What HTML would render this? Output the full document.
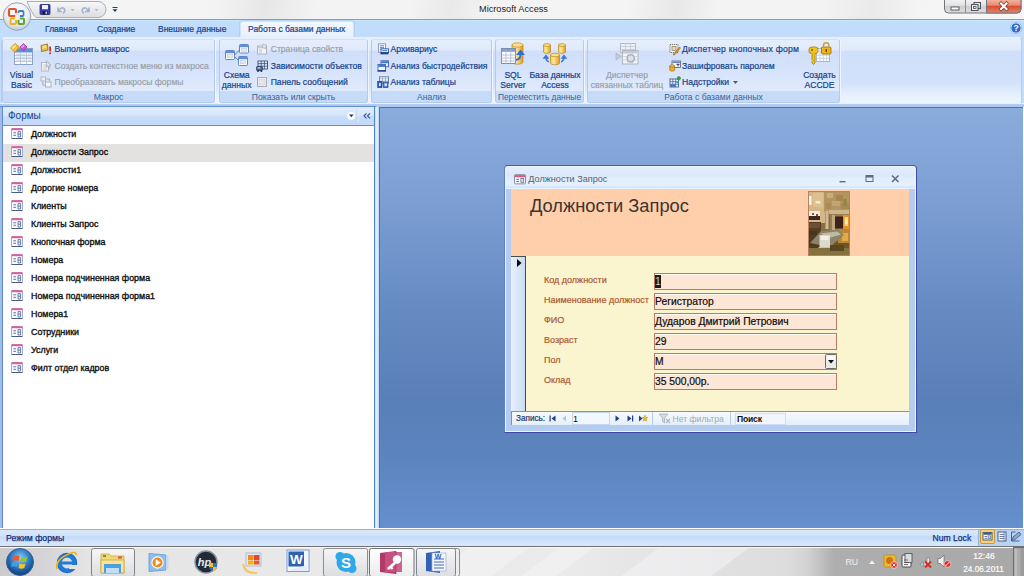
<!DOCTYPE html>
<html><head><meta charset="utf-8"><title>Microsoft Access</title>
<style>
*{box-sizing:border-box;margin:0;padding:0}
html,body{width:1024px;height:576px;overflow:hidden;background:#c2dcfb;font-family:"Liberation Sans",sans-serif;font-size:8.5px;color:#15428b}
.a{position:absolute;white-space:nowrap}
svg{position:absolute;overflow:visible}
#title{z-index:5;left:0;top:0;width:1024px;height:20px;background:linear-gradient(100deg,#f6f6f6 0%,#f3f3f3 21%,#e7e7e7 26%,#f3f3f3 31%,#f3f3f3 40%,#e9e9e9 44%,#f3f3f3 48%,#f4f4f4 61%,#e8e8e8 66%,#f3f3f3 70%,#f3f3f3 80%,#eaeaea 85%,#f5f5f5 90%,#f6f6f6 100%);border-bottom:1px solid #8e9cb0}
#tabs{left:0;top:20px;width:1024px;height:18px;background:linear-gradient(#c8e6fd 0,#c8e6fd 1px,#c2dcfb 1px)}
.tab{top:4px;font-size:8.5px;color:#15428b;-webkit-text-stroke:0.2px #15428b}
#atab{left:240px;top:1px;width:114px;height:17px;background:linear-gradient(#f4f8fe,#e6effc);border:1px solid #d3e3f7;border-bottom:none;border-radius:3px 3px 0 0;box-shadow:0 0 0 1px rgba(160,195,240,.5)}
#ribbon{left:1px;top:37px;width:1021px;height:67px;border:1px solid #b4cff0;border-top-color:#e9f2fb;border-bottom-color:#eaf4fb;border-radius:3px;background:linear-gradient(#e6effc 0,#dfeafb 12px,#cfdefa 13px,#d3e2fa 45px,#e6f1fc 58px,#eaf5fd 66px)}
.grp{top:1px;height:63.500px;border:1px solid #b4cbec;border-top-color:#d3e1f2;border-radius:3px;background:linear-gradient(#e6eefc 0,#e1eafb 10px,#d0defa 11px,#d6e3fb 30px,#dfeafc 50.500px,#c5dbf8 51.500px,#c5dbf8 63px);box-shadow:1px 0 0 #eef5fd,0 1px 0 #eef5fd}
.gl{bottom:-0.500px;left:0;right:0;text-align:center;font-size:8.6px;color:#3a6297;height:10px;line-height:10px}
.sb{font-size:8.6px;color:#15428b;height:10px;line-height:10px;-webkit-text-stroke:0.2px #15428b}

.bl{font-size:8.6px;line-height:10px;text-align:center;color:#15428b;-webkit-text-stroke:0.2px #15428b}

#nav{left:0;top:107px;width:379px;height:422px;background:linear-gradient(90deg,#a3bce3 0,#a3bce3 2px,#5f8cd4 2px,#5f8cd4 3px,#c6dcf8 3px,#c6dcf8 375px,#d4e6fb 376px,#f2f8ff 377px,#c3daf7 378px,#c3daf7 379px)}
#navhead{left:3px;top:0;width:372px;height:18.500px;background:linear-gradient(#e1edfc,#d6e6fb 45%,#c6dbf8 55%,#c4daf8);border-bottom:1.500px solid #5f8fd8;border-right:1px solid #4f84d2}
#navbody{left:3px;top:18.500px;width:372px;height:403px;background:#fff;border-right:1px solid #4f84d2}
.ni{left:0;width:371px;height:18px}
.ni span{position:absolute;left:28px;top:3px;font-size:8.9px;line-height:10px;color:#111;-webkit-text-stroke:0.35px #111}
.ni.sel{background:#e4e1e1}
#ws{left:379px;top:107px;width:644px;height:421px;box-shadow:1px 0 0 #fff;border-top:1px solid #6b6f78;border-left:1px solid #6b6f78;background:linear-gradient(#8aacdc 0%,#7c9ed3 22%,#678cc4 46%,#5a7fb8 70%,#5c84be 83%,#668fce 100%)}
#status{left:0;top:528px;width:1024px;height:18px;background:linear-gradient(#fff 0,#fff 1px,#8fb3e3 1px,#8fb3e3 2px,#d8e8fc 2px,#d2e4fb 7px,#c1d9f8 9px,#cfe3fb 13px,#d6e8fc 18px)}
#task{left:0;top:546px;width:1024px;height:30px;background:linear-gradient(90deg,#cbcbcd 0,#d6d6d8 50px,#e4e4e5 88px,#e9e9ea 300px,#ebebeb 560px,#e2e2e3 700px,#dcdcdc 790px,#d2d2d2 808px,#aeaeae 834px,#a8a8a8 1010px,#9a9a9a 1024px);border-top:1px solid #6f6f6f;box-shadow:inset 0 1px 0 #fafafa}

#fw{left:504px;top:165px;width:413px;height:268px;border:1px solid #3d4aa3;border-left-color:#5f7fc4;border-top-color:#4a58aa;border-radius:4px 4px 0 0;background:linear-gradient(#fff 0,#fff 1px,#e3edfc 1px,#dce9fb 10px,#e2edfc 12px,#e6f0fd 20px,#c4e4fb 21px,#e8f2fd 22.5px,#dbe8f9 23px);box-shadow:inset 0 0 0 1px #eef4fd}
#fwin{left:1px;top:23px;width:409px;height:242px;background:#b4ccf0}
#fhead{left:5px;top:0;width:398px;height:67px;background:#ffcfac}
#fdet{left:5px;top:67px;width:398px;height:155px;background:#fbf5cf}
#rsel{left:0;top:0;width:14.500px;height:155px;background:linear-gradient(90deg,#e8f0fb,#c9dcf4);border-right:1px solid #4a4a4a;border-top:1px solid #4a4a4a}
.fl{left:33px;font-size:9px;line-height:11px;color:#ac5832;-webkit-text-stroke:0.2px #ac5832}
.fb{left:142.500px;width:183px;height:17px;border:1px solid #bb7a64;background:#fce6d6;box-shadow:inset 0 1px 0 #fffaf4;font-size:10.300px;line-height:15px;color:#0c0c0c;padding-left:0.500px;-webkit-text-stroke:0.2px #0c0c0c}
#fnav{left:5px;top:222px;width:398px;height:14px;background:linear-gradient(#f7fafe,#e4effc);border-top:1px solid #6a96d8;border-left:1px solid #6a96d8}
.sb.dis,.bl.dis{color:#979da6;-webkit-text-stroke:0.15px #979da6}
</style></head><body>
<!-- TITLE BAR -->
<div id="title" class="a">
 <svg width="120" height="34" viewBox="0 0 120 34" style="left:0;top:0">
  <defs>
   <radialGradient id="ob" cx="0.5" cy="0.35" r="0.7"><stop offset="0" stop-color="#ffffff"/><stop offset="0.6" stop-color="#e9edf3"/><stop offset="1" stop-color="#b9c2d0"/></radialGradient>
   <linearGradient id="qg" x1="0" y1="0" x2="0" y2="1"><stop offset="0" stop-color="#f7f7f8"/><stop offset="1" stop-color="#dcdee2"/></linearGradient>
  </defs>
  <path d="M27 1.5 H98 a8 8 0 0 1 0 16 H36 Q32 14 27 1.5Z" fill="url(#qg)" stroke="#a9adb6" stroke-width="1"/>
  <circle cx="17" cy="16.5" r="13.8" fill="url(#ob)" stroke="#9aa3b3" stroke-width="1"/>
  <rect x="9" y="9" width="7" height="7" rx="1.2" fill="none" stroke="#e0552a" stroke-width="2.2"/>
  <rect x="18.5" y="11" width="5" height="5" rx="1" fill="none" stroke="#3f7fd0" stroke-width="1.8"/>
  <rect x="10.5" y="18.5" width="5.5" height="5.5" rx="1" fill="none" stroke="#efb321" stroke-width="2"/>
  <rect x="18.5" y="18.5" width="5.5" height="5.5" rx="1" fill="none" stroke="#5aa83a" stroke-width="2"/>
  <rect x="15" y="13" width="5" height="7" fill="#f7f4ea" opacity="0.85"/>
  <!-- save -->
  <rect x="40" y="4.5" width="10" height="10" rx="0.8" fill="#3a3fb0" stroke="#23277a" stroke-width="0.8"/>
  <rect x="42" y="5" width="6" height="4.2" fill="#eef0fb"/>
  <rect x="42.5" y="11" width="5" height="3.4" fill="#15173f"/><rect x="45.5" y="11.6" width="1.4" height="2.2" fill="#e8e8f4"/>
  <!-- undo -->
  <path d="M58 7.5 v4 h4 M58.5 11 q2.5 -4.5 5.5 -2.5 q2 2 -1 5" fill="none" stroke="#9fb3d3" stroke-width="1.6"/>
  <path d="M70.5 9 h4 l-2 2.2z" fill="#b0b7c3"/>
  <!-- redo -->
  <path d="M89 7.5 v4 h-4 M88.5 11 q-2.500 -4.500 -5.500 -2.500 q-2 2 1 5" fill="none" stroke="#9fb3d3" stroke-width="1.6"/>
  <path d="M94.500 9 h4 l-2 2.200z" fill="#b0b7c3"/>
  <!-- customize -->
  <rect x="112.500" y="7" width="5" height="1" fill="#1d3f7f"/><path d="M112.500 9.300 h5 l-2.500 2.700z" fill="#1d3f7f"/>
 </svg>
 <span class="a" id="wtitle" style="left:479px;top:4px;font-size:9.2px;color:#1e1e1e;line-height:11px">Microsoft Access</span>
 <svg width="78" height="15" viewBox="0 0 78 15" style="left:944px;top:0">
  <defs>
   <linearGradient id="wb" x1="0" y1="0" x2="0" y2="1"><stop offset="0" stop-color="#f4f4f4"/><stop offset="0.45" stop-color="#e3e3e3"/><stop offset="0.5" stop-color="#cfcfcf"/><stop offset="1" stop-color="#dddddd"/></linearGradient>
   <linearGradient id="wc" x1="0" y1="0" x2="0" y2="1"><stop offset="0" stop-color="#f3b9a6"/><stop offset="0.45" stop-color="#e88a70"/><stop offset="0.5" stop-color="#dc4a30"/><stop offset="1" stop-color="#e08868"/></linearGradient>
  </defs>
  <path d="M0.500 -1 V9 a4 4 0 0 0 4 4 H73 a4 4 0 0 0 4 -4 V-1Z" fill="url(#wb)" stroke="#70747c" stroke-width="1"/>
  <path d="M42.500 -1 V13 H73 a4 4 0 0 0 4 -4 V-1Z" fill="url(#wc)" stroke="#70747c" stroke-width="1"/>
  <path d="M21.500 0 V13" stroke="#8a8d94" stroke-width="1"/>
  <rect x="7" y="7" width="8" height="3" fill="#fff" stroke="#4d5158" stroke-width="0.9"/>
  <rect x="30" y="2.500" width="6.500" height="6" fill="none" stroke="#4d5158" stroke-width="1"/>
  <rect x="27.500" y="4.500" width="6.500" height="6" fill="#f0f0f0" stroke="#4d5158" stroke-width="1"/>
  <rect x="29.500" y="6.500" width="2.500" height="2" fill="none" stroke="#4d5158" stroke-width="0.8"/>
  <path d="M57 3.500 l5.500 5.500 M62.500 3.500 l-5.500 5.500" stroke="#6a3a32" stroke-width="3.400" stroke-linecap="square"/>
  <path d="M57 3.500 l5.500 5.500 M62.500 3.500 l-5.500 5.500" stroke="#fff" stroke-width="2.100" stroke-linecap="square"/>
 </svg>
</div>
<!-- TABS -->
<div id="tabs" class="a">
 <svg width="12" height="12" viewBox="0 0 12 12" style="left:1009.5px;top:2px"><circle cx="6" cy="6" r="5.200" fill="#2f6fd0" stroke="#e8f1fd" stroke-width="1"/><circle cx="6" cy="6" r="5.700" fill="none" stroke="#7ea6dc" stroke-width="0.600"/><text x="6" y="9" font-size="8.500" font-weight="bold" fill="#fff" text-anchor="middle" font-family="Liberation Sans, sans-serif">?</text></svg>
 <div id="atab" class="a"></div>
 <span class="a tab" style="left:45px">Главная</span>
 <span class="a tab" style="left:97px">Создание</span>
 <span class="a tab" style="left:158px">Внешние данные</span>
 <span class="a tab" style="left:248px">Работа с базами данных</span>
</div>
<!-- RIBBON -->
<div id="ribbon" class="a">
 <div class="a grp" id="g1" style="left:0px;width:213px"><div class="a gl">Макрос</div></div>
 <div class="a grp" id="g2" style="left:217px;width:149px"><div class="a gl">Показать или скрыть</div></div>
 <div class="a grp" id="g3" style="left:369px;width:121px"><div class="a gl">Анализ</div></div>
 <div class="a grp" id="g4" style="left:493px;width:89px"><div class="a gl" style="font-size:8.400px">Переместить данные</div></div>
 <div class="a grp" id="g5" style="left:585px;width:253px"><div class="a gl">Работа с базами данных</div></div>
</div>
<div id="rc" class="a" style="left:0;top:0;width:1024px;height:0">
<svg width="24" height="23" viewBox="0 0 24 23" style="left:10px;top:43px"><rect x="4.500" y="5.500" width="18" height="16" fill="#fdfdfe" stroke="#8aa0c4" stroke-width="1"/><rect x="5" y="6" width="17" height="3.500" fill="#5d8fdc"/><path d="M5 12.500 h17 M5 15.500 h17 M5 18.500 h17 M10.500 9.500 v12 M16.500 9.500 v12" stroke="#b4c3dc" stroke-width="0.900"/><rect x="6" y="10.500" width="4" height="1.500" fill="#d5deec"/><rect x="11.500" y="10.500" width="4" height="1.500" fill="#d5deec"/><rect x="17.500" y="10.500" width="4" height="1.500" fill="#d5deec"/><rect x="6" y="13.500" width="4" height="1.500" fill="#d5deec"/><rect x="11.500" y="13.500" width="4" height="1.500" fill="#d5deec"/><rect x="17.500" y="13.500" width="4" height="1.500" fill="#d5deec"/><rect x="6" y="16.500" width="4" height="1.500" fill="#d5deec"/><rect x="11.500" y="16.500" width="4" height="1.500" fill="#d5deec"/><rect x="17.500" y="16.500" width="4" height="1.500" fill="#d5deec"/><path d="M0.500 5 l4.500 -4.500 l4.500 3.500 l-4.500 5.500z" fill="#f2c030" stroke="#b0851a" stroke-width="0.700"/><path d="M1.500 5 l3.500 -3.500 l1.500 1.200 l-3.500 3.700z" fill="#fbe28a"/><path d="M10 4 l3.500 -3.500 l3.500 3.500 l-3.500 4z" fill="#d64fd6" stroke="#9a2c9a" stroke-width="0.700"/><path d="M11 4 l2.500 -2.500 l1.200 1.200 l-2.500 2.600z" fill="#f0a0f0"/></svg><div class="a bl" style="left:-28.5px;width:100px;top:69.5px">Visual<br>Basic</div>
<svg width="12" height="12" viewBox="0 0 12 12" style="left:40px;top:43px"><path d="M1 2.500 l6.500 -1.500 l0.500 6 l-6.500 1.500z" fill="#e9c04a" stroke="#8a6a1a" stroke-width="0.800"/><path d="M2.500 3.500 l3.500 -0.800 M2.700 5.200 l3.500 -0.800" stroke="#fff6cf" stroke-width="0.800"/><rect x="9.300" y="3.500" width="1.700" height="5" fill="#d8261c"/><rect x="9.300" y="9.500" width="1.700" height="1.700" fill="#d8261c"/></svg><span class="a sb" style="left:54.5px;top:44px">Выполнить макрос</span>
<svg width="12" height="12" viewBox="0 0 12 12" style="left:40px;top:59.5px"><rect x="1.500" y="2.500" width="7" height="8.500" fill="#f2f4f7" stroke="#aab1bd" stroke-width="0.900"/><path d="M3 5 h4 M3 7 h4 M3 9 h4" stroke="#bcc3cf" stroke-width="0.800"/><path d="M6.500 1 l4.500 4 l-2 0.300 l1 2.700 l-1.200 0.400 l-1 -2.600 l-1.300 1.200z" fill="#e4e8ee" stroke="#9aa2b0" stroke-width="0.700"/></svg><span class="a sb dis" style="left:54.5px;top:60.5px">Создать контекстное меню из макроса</span>
<svg width="12" height="12" viewBox="0 0 12 12" style="left:40px;top:76px"><rect x="1" y="1" width="4.500" height="4" fill="#eef0f4" stroke="#a6adba" stroke-width="0.900"/><rect x="5.500" y="6" width="5.500" height="5" fill="#f4f5f8" stroke="#a6adba" stroke-width="0.900"/><path d="M6.500 3 h3 v2.200 M2.800 6 v3.200 h2" fill="none" stroke="#9ca4b2" stroke-width="0.900"/></svg><span class="a sb dis" style="left:54.5px;top:77px">Преобразовать макросы формы</span>
<svg width="24" height="23" viewBox="0 0 24 23" style="left:225px;top:44px"><path d="M9 11.500 l6 -6 M9 12.500 l6 5" stroke="#5f7fb4" stroke-width="1"/><rect x="0.5" y="6.5" width="9" height="9" rx="0.800" fill="#fbfcfe" stroke="#5f86c8" stroke-width="1"/><rect x="1.0" y="7.0" width="8" height="2.200" fill="#5d8fdc"/><rect x="2.3" y="10.3" width="5.4" height="3.4000000000000004" fill="#e3e9f3" stroke="#b9c4d8" stroke-width="0.500"/><rect x="14.5" y="0.5" width="9" height="8.5" rx="0.800" fill="#fbfcfe" stroke="#5f86c8" stroke-width="1"/><rect x="15.0" y="1.0" width="8" height="2.200" fill="#5d8fdc"/><rect x="16.3" y="4.3" width="5.4" height="2.9000000000000004" fill="#e3e9f3" stroke="#b9c4d8" stroke-width="0.500"/><rect x="13.5" y="12.5" width="9" height="9" rx="0.800" fill="#fbfcfe" stroke="#5f86c8" stroke-width="1"/><rect x="14.0" y="13.0" width="8" height="2.200" fill="#5d8fdc"/><rect x="15.3" y="16.3" width="5.4" height="3.4000000000000004" fill="#e3e9f3" stroke="#b9c4d8" stroke-width="0.500"/></svg><div class="a bl" style="left:186.7px;width:100px;top:69.5px">Схема<br>данных</div>
<svg width="12" height="12" viewBox="0 0 12 12" style="left:256px;top:43px"><rect x="1.500" y="3" width="9" height="8" fill="#f1f3f7" stroke="#a9b0bd" stroke-width="0.900"/><rect x="2" y="3.500" width="8" height="1.800" fill="#c5ccd8"/><path d="M3 7 h3 M3 9 h3" stroke="#b3bac6" stroke-width="0.800"/><path d="M7 1 l3.500 1.200 l-1 3.300 l-3.500 -1.200z" fill="#e5e8ee" stroke="#a3abb8" stroke-width="0.700"/></svg><span class="a sb dis" style="left:270.7px;top:44px">Страница свойств</span>
<svg width="12" height="12" viewBox="0 0 12 12" style="left:256px;top:59.5px"><rect x="2" y="1" width="9.500" height="8" fill="#e3ebf8" stroke="#35507f" stroke-width="0.900"/><path d="M2 3.600 h9.500 M2 6.200 h9.500 M5.200 1 v8 M8.400 1 v8" stroke="#35507f" stroke-width="0.800"/><rect x="0.500" y="6.500" width="6" height="4" rx="0.800" fill="#4a5f86" stroke="#243a60" stroke-width="0.700"/><rect x="1.500" y="7.300" width="3" height="1.300" fill="#cfd8ea"/><circle cx="2" cy="11" r="1" fill="#1f2f50"/><circle cx="5.300" cy="11" r="1" fill="#1f2f50"/></svg><span class="a sb" style="left:270.7px;top:60.5px">Зависимости объектов</span>
<svg width="12" height="12" viewBox="0 0 12 12" style="left:256px;top:76px"><rect x="1.500" y="1.500" width="9" height="9" fill="#f4f4f4" stroke="#a8aeb8" stroke-width="1"/><rect x="3" y="3" width="6" height="6" fill="#e6e6e6" stroke="#c9cdd3" stroke-width="0.600"/></svg><span class="a sb" style="left:270.7px;top:77px">Панель сообщений</span>
<svg width="12" height="12" viewBox="0 0 12 12" style="left:376.5px;top:43px"><rect x="1.500" y="0.800" width="7" height="8.500" fill="#fdfeff" stroke="#7f95bd" stroke-width="0.900"/><path d="M3 2.800 h4 M3 4.600 h4 M3 6.400 h4" stroke="#3f78d8" stroke-width="0.900"/><rect x="4" y="5.800" width="7.500" height="3.800" fill="#dfe8f7" stroke="#3a5a9a" stroke-width="0.900"/><rect x="3.500" y="9.300" width="8" height="2" fill="#1f3f80"/><path d="M5.500 7.500 h4.500" stroke="#3f78d8" stroke-width="0.900"/></svg><span class="a sb" style="left:390.5px;top:44px">Архивариус</span>
<svg width="12" height="12" viewBox="0 0 12 12" style="left:376.5px;top:59.5px"><rect x="4" y="0.800" width="7.500" height="6" fill="#eaf1fc" stroke="#3a62b0" stroke-width="0.900"/><rect x="4.400" y="1.200" width="6.700" height="2" fill="#3f78d8"/><rect x="1" y="4.500" width="7.500" height="6" fill="#f8fafe" stroke="#3a62b0" stroke-width="0.900"/><rect x="1.400" y="4.900" width="6.700" height="2" fill="#3f78d8"/><rect x="0.500" y="10.300" width="8.500" height="1.400" fill="#1f3f80"/></svg><span class="a sb" style="left:390.5px;top:60.5px">Анализ быстродействия</span>
<svg width="12" height="12" viewBox="0 0 12 12" style="left:376.5px;top:76px"><rect x="2.500" y="0.800" width="9" height="6.500" fill="#f6f7fa" stroke="#6b7c99" stroke-width="0.900"/><path d="M2.500 2.800 h9 M2.500 5 h9 M5.500 0.800 v6.500 M8.500 0.800 v6.500" stroke="#8d9bb5" stroke-width="0.600"/><rect x="0.700" y="5.500" width="4.300" height="6" fill="#2f62c0" stroke="#1a3a80" stroke-width="0.700"/><rect x="2" y="7" width="1.600" height="3" fill="#e8effc"/><rect x="6.500" y="6" width="4.500" height="5.500" fill="#4f86dc" stroke="#1f3f80" stroke-width="0.700"/><rect x="7.600" y="7.500" width="2.300" height="2.300" fill="#e8effc"/></svg><span class="a sb" style="left:390.5px;top:77px">Анализ таблицы</span>
<svg width="24" height="23" viewBox="0 0 24 23" style="left:501px;top:43px"><defs><linearGradient id="cy" x1="0" y1="0" x2="1" y2="0"><stop offset="0" stop-color="#f7c843"/><stop offset="0.35" stop-color="#fde9a2"/><stop offset="1" stop-color="#e29a14"/></linearGradient></defs><path d="M11 2 v17 a5.5 2.2 0 0 0 11 0 v-17z" fill="url(#cy)" stroke="#b27a10" stroke-width="0.600"/><ellipse cx="16.5" cy="2" rx="5.5" ry="2.2" fill="#fbe08a" stroke="#b27a10" stroke-width="0.600"/><rect x="0.500" y="5.500" width="14" height="15" fill="#fdfdfe" stroke="#7d8fae" stroke-width="1"/><rect x="1" y="6" width="13" height="2.800" fill="#7f9fd6"/><path d="M0.500 12 h14 M0.500 15 h14 M0.500 18 h14 M5 6 v14.500 M9.700 6 v14.500" stroke="#aab7cf" stroke-width="0.800"/><path d="M15 17 q5 -1 4.500 -6.500 M17 11 l2.500 -3 l2.500 3z" fill="none" stroke="#2f6fd0" stroke-width="1.800"/><path d="M16.800 11.200 l2.700 -3.400 l2.700 3.400z" fill="#2f6fd0"/></svg><div class="a bl" style="left:463px;width:100px;top:69.5px">SQL<br>Server</div>
<svg width="24" height="23" viewBox="0 0 24 23" style="left:543px;top:43px"><defs><linearGradient id="cy2" x1="0" y1="0" x2="1" y2="0"><stop offset="0" stop-color="#f7c843"/><stop offset="0.35" stop-color="#fde9a2"/><stop offset="1" stop-color="#e29a14"/></linearGradient></defs><path d="M0.5 2 v7 a3.5 1.4 0 0 0 7 0 v-7z" fill="url(#cy2)" stroke="#b27a10" stroke-width="0.600"/><ellipse cx="4.0" cy="2" rx="3.5" ry="1.4" fill="#fbe08a" stroke="#b27a10" stroke-width="0.600"/><path d="M15.5 2 v7 a3.5 1.4 0 0 0 7 0 v-7z" fill="url(#cy2)" stroke="#b27a10" stroke-width="0.600"/><ellipse cx="19.0" cy="2" rx="3.5" ry="1.4" fill="#fbe08a" stroke="#b27a10" stroke-width="0.600"/><path d="M7.5 12 v8 a4.5 1.8 0 0 0 9 0 v-8z" fill="url(#cy2)" stroke="#b27a10" stroke-width="0.600"/><ellipse cx="12.0" cy="12" rx="4.5" ry="1.8" fill="#fbe08a" stroke="#b27a10" stroke-width="0.600"/><path d="M6 19 q-3 -1 -3 -4.500 M1 15 l2 -2.500 l2 2.500z M18 19 q3 -1 3 -4.500 M19 15 l2 -2.500 l2 2.500z" fill="#3a78d8" stroke="#3a78d8" stroke-width="1.300"/></svg><div class="a bl" style="left:505px;width:100px;top:69.5px">База данных<br>Access</div>
<svg width="24" height="23" viewBox="0 0 24 23" style="left:614.5px;top:43px"><rect x="5.500" y="0.500" width="15" height="9" fill="#eef0f4" stroke="#b4bbc8" stroke-width="1"/><path d="M5.500 3.500 h15 M5.500 6.500 h15 M10.500 0.500 v9 M15.500 0.500 v9" stroke="#c2c8d3" stroke-width="0.800"/><rect x="7.500" y="7.500" width="15.500" height="13.500" fill="#f3f4f7" stroke="#aeb6c4" stroke-width="1"/><rect x="8" y="8" width="14.500" height="2.500" fill="#c3cad6"/><path d="M7.500 13.500 h15.500 M7.500 17 h15.500 M12.500 10.500 v10.500 M17.500 10.500 v10.500" stroke="#c8ced8" stroke-width="0.800"/><circle cx="15.800" cy="15.300" r="3.600" fill="#dde1e8" stroke="#a9b1bf" stroke-width="1.600"/><path d="M1 10 l5.500 3.500 l-5.500 3.500z" fill="#c3c9d4" stroke="#aab1be" stroke-width="0.600"/></svg><div class="a bl dis" style="left:577px;width:100px;top:69.5px">Диспетчер<br>связанных таблиц</div>
<svg width="12" height="12" viewBox="0 0 12 12" style="left:668.5px;top:43px"><rect x="1" y="1.500" width="8" height="8" fill="#f4f2ea" stroke="#6e6a5a" stroke-width="0.900" stroke-dasharray="1.200 0.800"/><rect x="3" y="3.500" width="4" height="4" fill="#dcd7c4" stroke="#7c7763" stroke-width="0.600"/><path d="M5 10.500 l5.500 -6.500 l1 1 l-5.500 6.500 l-1.500 0.500z" fill="#e8a12c" stroke="#8a5a12" stroke-width="0.600"/></svg><span class="a sb" style="left:682px;top:44px;letter-spacing:0.230px">Диспетчер кнопочных форм</span>
<svg width="12" height="12" viewBox="0 0 12 12" style="left:668.5px;top:59.5px"><rect x="3" y="1" width="8.500" height="6.500" fill="#f4f6fa" stroke="#5b6f94" stroke-width="0.900"/><rect x="3.500" y="1.500" width="7.500" height="1.600" fill="#6f86b3"/><path d="M7.500 4.500 h3 M9 3.500 v3" stroke="#333" stroke-width="0.800"/><path d="M0.800 6 v4 a2.400 1.100 0 0 0 4.800 0 v-4z" fill="#f0b320" stroke="#9a6a0a" stroke-width="0.700"/><ellipse cx="3.200" cy="6" rx="2.400" ry="1.100" fill="#fbd870" stroke="#9a6a0a" stroke-width="0.700"/></svg><span class="a sb" style="left:682px;top:60.5px">Зашифровать паролем</span>
<svg width="12" height="12" viewBox="0 0 12 12" style="left:668.5px;top:76px"><rect x="1" y="3" width="8.500" height="8" fill="#eef2fa" stroke="#3f5f9a" stroke-width="0.900"/><path d="M1 5.600 h8.500 M1 8.200 h8.500 M3.800 3 v8 M6.600 3 v8" stroke="#3f5f9a" stroke-width="0.700"/><rect x="1.500" y="8.500" width="2" height="2.200" fill="#2f5fb5"/><rect x="4.200" y="8.500" width="2" height="2.200" fill="#2f5fb5"/><circle cx="9.800" cy="2.300" r="1.700" fill="#3aa83a" stroke="#1f6f1f" stroke-width="0.500"/><circle cx="8.200" cy="6.200" r="1.300" fill="#35b7c8"/></svg><span class="a sb" style="left:682px;top:77px">Надстройки</span><svg width="5" height="3" viewBox="0 0 5 3" style="left:732.5px;top:81px"><path d="M0 0 h5 l-2.500 3z" fill="#4a5f80"/></svg>
<svg width="24" height="23" viewBox="0 0 24 23" style="left:808px;top:43px"><rect x="8.500" y="5.500" width="13" height="13" fill="#fdfdfe" stroke="#a9b4c8" stroke-width="1"/><path d="M8.500 9 h13 M8.500 12.200 h13 M8.500 15.400 h13 M12 5.500 v13 M15.300 5.500 v13 M18.600 5.500 v13" stroke="#c0c8d8" stroke-width="0.800"/><path d="M1 6.500 q0 -2.500 3 -2.500 h3.500 q2.500 0 2.500 2.500 v2 q0 2 -2.500 2 h-0.500 v9.500 l-1.500 1.500 l-1.500 -1.500 v-1.500 l1 -1 l-1 -1 v-6 h-0.500 q-2.500 0 -2.500 -2z" fill="#f2c21d" stroke="#a87e08" stroke-width="0.800"/><circle cx="4" cy="7" r="1.100" fill="#8a6a10"/><rect x="13.500" y="4" width="9.500" height="7" rx="1" fill="#edb41c" stroke="#946c08" stroke-width="0.800"/><path d="M15.500 4 v-1.500 a2.700 2.700 0 0 1 5.400 0 v1.500" fill="none" stroke="#c9a23a" stroke-width="1.400"/><rect x="17.600" y="6" width="1.300" height="3" fill="#5a4208"/></svg><div class="a bl" style="left:769.5px;width:100px;top:69.5px">Создать<br>ACCDE</div>
</div>
<div class="a" style="left:0;top:103px;width:1024px;height:4px;background:linear-gradient(#e6f1fa 0,#e6f1fa 1px,#b6cdf0 1px,#aac6ee 4px)"></div><div class="a" style="left:0;top:106px;width:376px;height:1px;background:#5f8fd8"></div>
<!-- NAV PANE -->
<div id="nav" class="a">
<div id="navhead" class="a"><span class="a" style="left:5px;top:3px;font-size:10px;line-height:12px;color:#15428b">Формы</span><svg width="30" height="16" viewBox="0 0 30 16" style="left:341px;top:0"><circle cx="7.300" cy="8.700" r="4.600" fill="#fbfdff" stroke="#c9dcf4" stroke-width="0.800"/><path d="M5 7.500 h4.600 l-2.300 2.800z" fill="#1d2f6f"/><path d="M13.800 2 v13" stroke="#eef5fe" stroke-width="1"/><path d="M12.900 2 v13" stroke="#b5d0f2" stroke-width="0.800"/><path d="M22.500 6.300 l-2.500 2.500 l2.500 2.500 M26 6.300 l-2.500 2.500 l2.500 2.500" fill="none" stroke="#2c4f9a" stroke-width="1.100"/></svg></div>
<div id="navbody" class="a">
 <div class="a ni" style="top:0.5px"><svg width="12" height="11" viewBox="0 0 12 11" style="left:8px;top:2px"><rect x="0.5" y="0.5" width="11" height="10" rx="0.8" fill="#fbfcfe" stroke="#a3acc8"/><path d="M0.5 10.500 h11" stroke="#4a5a8a" stroke-width="1"/><rect x="0.500" y="0.300" width="11" height="1.900" fill="#e8559a"/><path d="M2.300 4.800 h2.700 M2.300 7.300 h2.700" stroke="#5a72a8" stroke-width="1"/><path d="M7 3.600 h2.600 v5.400 h-2.600z M7 6.200 h2.600" fill="#eef1f8" stroke="#5a72a8" stroke-width="0.900"/></svg><span>Должности</span></div>
 <div class="a ni sel" style="top:18.5px"><svg width="12" height="11" viewBox="0 0 12 11" style="left:8px;top:2px"><rect x="0.5" y="0.5" width="11" height="10" rx="0.8" fill="#fbfcfe" stroke="#a3acc8"/><path d="M0.5 10.500 h11" stroke="#4a5a8a" stroke-width="1"/><rect x="0.500" y="0.300" width="11" height="1.900" fill="#e8559a"/><path d="M2.300 4.800 h2.700 M2.300 7.300 h2.700" stroke="#5a72a8" stroke-width="1"/><path d="M7 3.600 h2.600 v5.400 h-2.600z M7 6.200 h2.600" fill="#eef1f8" stroke="#5a72a8" stroke-width="0.900"/></svg><span>Должности Запрос</span></div>
 <div class="a ni" style="top:36.5px"><svg width="12" height="11" viewBox="0 0 12 11" style="left:8px;top:2px"><rect x="0.5" y="0.5" width="11" height="10" rx="0.8" fill="#fbfcfe" stroke="#a3acc8"/><path d="M0.5 10.500 h11" stroke="#4a5a8a" stroke-width="1"/><rect x="0.500" y="0.300" width="11" height="1.900" fill="#e8559a"/><path d="M2.300 4.800 h2.700 M2.300 7.300 h2.700" stroke="#5a72a8" stroke-width="1"/><path d="M7 3.600 h2.600 v5.400 h-2.600z M7 6.200 h2.600" fill="#eef1f8" stroke="#5a72a8" stroke-width="0.900"/></svg><span>Должности1</span></div>
 <div class="a ni" style="top:54.5px"><svg width="12" height="11" viewBox="0 0 12 11" style="left:8px;top:2px"><rect x="0.5" y="0.5" width="11" height="10" rx="0.8" fill="#fbfcfe" stroke="#a3acc8"/><path d="M0.5 10.500 h11" stroke="#4a5a8a" stroke-width="1"/><rect x="0.500" y="0.300" width="11" height="1.900" fill="#e8559a"/><path d="M2.300 4.800 h2.700 M2.300 7.300 h2.700" stroke="#5a72a8" stroke-width="1"/><path d="M7 3.600 h2.600 v5.400 h-2.600z M7 6.200 h2.600" fill="#eef1f8" stroke="#5a72a8" stroke-width="0.900"/></svg><span>Дорогие номера</span></div>
 <div class="a ni" style="top:72.5px"><svg width="12" height="11" viewBox="0 0 12 11" style="left:8px;top:2px"><rect x="0.5" y="0.5" width="11" height="10" rx="0.8" fill="#fbfcfe" stroke="#a3acc8"/><path d="M0.5 10.500 h11" stroke="#4a5a8a" stroke-width="1"/><rect x="0.500" y="0.300" width="11" height="1.900" fill="#e8559a"/><path d="M2.300 4.800 h2.700 M2.300 7.300 h2.700" stroke="#5a72a8" stroke-width="1"/><path d="M7 3.600 h2.600 v5.400 h-2.600z M7 6.200 h2.600" fill="#eef1f8" stroke="#5a72a8" stroke-width="0.900"/></svg><span>Клиенты</span></div>
 <div class="a ni" style="top:90.5px"><svg width="12" height="11" viewBox="0 0 12 11" style="left:8px;top:2px"><rect x="0.5" y="0.5" width="11" height="10" rx="0.8" fill="#fbfcfe" stroke="#a3acc8"/><path d="M0.5 10.500 h11" stroke="#4a5a8a" stroke-width="1"/><rect x="0.500" y="0.300" width="11" height="1.900" fill="#e8559a"/><path d="M2.300 4.800 h2.700 M2.300 7.300 h2.700" stroke="#5a72a8" stroke-width="1"/><path d="M7 3.600 h2.600 v5.400 h-2.600z M7 6.200 h2.600" fill="#eef1f8" stroke="#5a72a8" stroke-width="0.900"/></svg><span>Клиенты Запрос</span></div>
 <div class="a ni" style="top:108.5px"><svg width="12" height="11" viewBox="0 0 12 11" style="left:8px;top:2px"><rect x="0.5" y="0.5" width="11" height="10" rx="0.8" fill="#fbfcfe" stroke="#a3acc8"/><path d="M0.5 10.500 h11" stroke="#4a5a8a" stroke-width="1"/><rect x="0.500" y="0.300" width="11" height="1.900" fill="#e8559a"/><path d="M2.300 4.800 h2.700 M2.300 7.300 h2.700" stroke="#5a72a8" stroke-width="1"/><path d="M7 3.600 h2.600 v5.400 h-2.600z M7 6.200 h2.600" fill="#eef1f8" stroke="#5a72a8" stroke-width="0.900"/></svg><span>Кнопочная форма</span></div>
 <div class="a ni" style="top:126.5px"><svg width="12" height="11" viewBox="0 0 12 11" style="left:8px;top:2px"><rect x="0.5" y="0.5" width="11" height="10" rx="0.8" fill="#fbfcfe" stroke="#a3acc8"/><path d="M0.5 10.500 h11" stroke="#4a5a8a" stroke-width="1"/><rect x="0.500" y="0.300" width="11" height="1.900" fill="#e8559a"/><path d="M2.300 4.800 h2.700 M2.300 7.300 h2.700" stroke="#5a72a8" stroke-width="1"/><path d="M7 3.600 h2.600 v5.400 h-2.600z M7 6.200 h2.600" fill="#eef1f8" stroke="#5a72a8" stroke-width="0.900"/></svg><span>Номера</span></div>
 <div class="a ni" style="top:144.5px"><svg width="12" height="11" viewBox="0 0 12 11" style="left:8px;top:2px"><rect x="0.5" y="0.5" width="11" height="10" rx="0.8" fill="#fbfcfe" stroke="#a3acc8"/><path d="M0.5 10.500 h11" stroke="#4a5a8a" stroke-width="1"/><rect x="0.500" y="0.300" width="11" height="1.900" fill="#e8559a"/><path d="M2.300 4.800 h2.700 M2.300 7.300 h2.700" stroke="#5a72a8" stroke-width="1"/><path d="M7 3.600 h2.600 v5.400 h-2.600z M7 6.200 h2.600" fill="#eef1f8" stroke="#5a72a8" stroke-width="0.900"/></svg><span>Номера подчиненная форма</span></div>
 <div class="a ni" style="top:162.5px"><svg width="12" height="11" viewBox="0 0 12 11" style="left:8px;top:2px"><rect x="0.5" y="0.5" width="11" height="10" rx="0.8" fill="#fbfcfe" stroke="#a3acc8"/><path d="M0.5 10.500 h11" stroke="#4a5a8a" stroke-width="1"/><rect x="0.500" y="0.300" width="11" height="1.900" fill="#e8559a"/><path d="M2.300 4.800 h2.700 M2.300 7.300 h2.700" stroke="#5a72a8" stroke-width="1"/><path d="M7 3.600 h2.600 v5.400 h-2.600z M7 6.200 h2.600" fill="#eef1f8" stroke="#5a72a8" stroke-width="0.900"/></svg><span>Номера подчиненная форма1</span></div>
 <div class="a ni" style="top:180.5px"><svg width="12" height="11" viewBox="0 0 12 11" style="left:8px;top:2px"><rect x="0.5" y="0.5" width="11" height="10" rx="0.8" fill="#fbfcfe" stroke="#a3acc8"/><path d="M0.5 10.500 h11" stroke="#4a5a8a" stroke-width="1"/><rect x="0.500" y="0.300" width="11" height="1.900" fill="#e8559a"/><path d="M2.300 4.800 h2.700 M2.300 7.300 h2.700" stroke="#5a72a8" stroke-width="1"/><path d="M7 3.600 h2.600 v5.400 h-2.600z M7 6.200 h2.600" fill="#eef1f8" stroke="#5a72a8" stroke-width="0.900"/></svg><span>Номера1</span></div>
 <div class="a ni" style="top:198.5px"><svg width="12" height="11" viewBox="0 0 12 11" style="left:8px;top:2px"><rect x="0.5" y="0.5" width="11" height="10" rx="0.8" fill="#fbfcfe" stroke="#a3acc8"/><path d="M0.5 10.500 h11" stroke="#4a5a8a" stroke-width="1"/><rect x="0.500" y="0.300" width="11" height="1.900" fill="#e8559a"/><path d="M2.300 4.800 h2.700 M2.300 7.300 h2.700" stroke="#5a72a8" stroke-width="1"/><path d="M7 3.600 h2.600 v5.400 h-2.600z M7 6.200 h2.600" fill="#eef1f8" stroke="#5a72a8" stroke-width="0.900"/></svg><span>Сотрудники</span></div>
 <div class="a ni" style="top:216.5px"><svg width="12" height="11" viewBox="0 0 12 11" style="left:8px;top:2px"><rect x="0.5" y="0.5" width="11" height="10" rx="0.8" fill="#fbfcfe" stroke="#a3acc8"/><path d="M0.5 10.500 h11" stroke="#4a5a8a" stroke-width="1"/><rect x="0.500" y="0.300" width="11" height="1.900" fill="#e8559a"/><path d="M2.300 4.800 h2.700 M2.300 7.300 h2.700" stroke="#5a72a8" stroke-width="1"/><path d="M7 3.600 h2.600 v5.400 h-2.600z M7 6.200 h2.600" fill="#eef1f8" stroke="#5a72a8" stroke-width="0.900"/></svg><span>Услуги</span></div>
 <div class="a ni" style="top:234.5px"><svg width="12" height="11" viewBox="0 0 12 11" style="left:8px;top:2px"><rect x="0.5" y="0.5" width="11" height="10" rx="0.8" fill="#fbfcfe" stroke="#a3acc8"/><path d="M0.5 10.500 h11" stroke="#4a5a8a" stroke-width="1"/><rect x="0.500" y="0.300" width="11" height="1.900" fill="#e8559a"/><path d="M2.300 4.800 h2.700 M2.300 7.300 h2.700" stroke="#5a72a8" stroke-width="1"/><path d="M7 3.600 h2.600 v5.400 h-2.600z M7 6.200 h2.600" fill="#eef1f8" stroke="#5a72a8" stroke-width="0.900"/></svg><span>Филт отдел кадров</span></div>
</div>
</div>
<!-- WORKSPACE -->
<div id="ws" class="a"></div>
<div id="fw" class="a">
 <span class="a" id="fwt" style="left:23.300px;top:8px;font-size:9.100px;line-height:11px;color:#5a5f68">Должности Запрос</span>
 <svg width="12" height="10.500" viewBox="0 0 13 11" style="left:8.700px;top:7.500px"><rect x="0.500" y="0.500" width="12" height="10" rx="1" fill="#f6f7fb" stroke="#7f86a0"/><rect x="1" y="1" width="11" height="2.300" fill="#d9567c"/><path d="M2.500 5.500 h3 M2.500 8 h3" stroke="#59658a" stroke-width="1"/><rect x="7.500" y="4.800" width="3" height="4" fill="#e1e6f2" stroke="#59658a" stroke-width="0.800"/></svg>
 <svg width="70" height="12" viewBox="0 0 70 12" style="left:330px;top:7px"><rect x="4.500" y="8" width="6" height="1.400" fill="#5d6c86"/><rect x="31" y="2.500" width="7" height="6" fill="none" stroke="#5d6c86" stroke-width="1"/><rect x="31" y="2.500" width="7" height="2" fill="#5d6c86"/><path d="M57 2.500 l6.500 6.500 M63.500 2.500 l-6.500 6.500" stroke="#5d6c86" stroke-width="1.500"/></svg>
 <div id="fwin" class="a">
  <div id="fhead" class="a"><span class="a" id="ftitle" style="left:19px;top:5px;font-size:18.3px;line-height:24px;color:#3c3431">Должности Запрос</span><svg width="42" height="65" viewBox="0 0 42 65" style="left:297px;top:2px">
   <defs><filter id="bl" x="-5%" y="-5%" width="110%" height="110%"><feGaussianBlur stdDeviation="0.700"/></filter>
   <clipPath id="cp"><rect x="1" y="1" width="40" height="63"/></clipPath></defs>
   <g clip-path="url(#cp)"><g filter="url(#bl)">
   <rect x="0" y="0" width="42" height="65" fill="#8a6c40"/>
   <rect x="0" y="0" width="17" height="32" fill="#d6b686"/>
   <rect x="5" y="2" width="10" height="14" fill="#dcc090"/>
   <rect x="16" y="0" width="26" height="21" fill="#b39562"/>
   <rect x="19" y="2" width="6" height="5" fill="#c9ae7c"/><rect x="28" y="4" width="7" height="6" fill="#a5864f"/><rect x="24" y="10" width="8" height="5" fill="#c2a671"/><rect x="33" y="12" width="8" height="6" fill="#a88a58"/><rect x="18" y="12" width="5" height="6" fill="#a98b57"/>
   <rect x="35.500" y="8" width="3" height="7" fill="#8a8a3a"/>
   <rect x="21" y="19" width="21" height="4" fill="#ccb58a"/>
   <rect x="22" y="23" width="20" height="17" fill="#9a7c50"/>
   <rect x="24" y="24" width="3" height="15" fill="#c0a87c"/>
   <rect x="27" y="25.500" width="10" height="12" fill="#3c241a"/>
   <rect x="35" y="24" width="6" height="14" fill="#e8902a"/><rect x="36.500" y="26" width="3.500" height="9" fill="#ffd868"/><rect x="37.500" y="28" width="2" height="5" fill="#fff4c0"/>
   <rect x="1" y="5" width="2.500" height="9" fill="#fbf6ea"/><rect x="7.500" y="10" width="5" height="2.500" fill="#f3ead6"/>
   <rect x="1" y="20" width="11" height="5.500" fill="#f4ede2"/><rect x="4" y="22" width="2" height="2" fill="#b8402a"/><rect x="8" y="23" width="2" height="2" fill="#a8382a"/><rect x="1" y="25" width="11" height="4" fill="#3a2a1a"/>
   <rect x="17.500" y="20" width="3" height="18" fill="#cdbc9c"/>
   <rect x="0" y="31" width="13" height="15" fill="#553c22"/><rect x="1" y="32" width="11" height="5" fill="#6e5030"/><rect x="0" y="40" width="9" height="8" fill="#4a341e"/>
   <rect x="0" y="46" width="42" height="19" fill="#6c5628"/>
   <rect x="30" y="38" width="12" height="14" fill="#b88838"/><rect x="34" y="42" width="6" height="8" fill="#e0aa48"/>
   <rect x="0" y="44" width="12" height="13" fill="#4d3a20"/><path d="M2 52 L13 40 L31 39 L36 44 L22 56 Z" fill="#8c8466"/><path d="M12 42.500 L29 40.500 L33 43.500 L21 47 Z" fill="#bdb9a6"/>
   <rect x="11.500" y="44" width="10.500" height="14" fill="#dedace"/><rect x="12.500" y="45" width="8" height="4" fill="#f2efe6"/><rect x="10.500" y="56" width="12.500" height="3" fill="#c9c3b0"/>
   <rect x="0" y="57" width="42" height="8" fill="#86703e"/><rect x="22" y="54" width="14" height="6" fill="#5a4624"/>
   </g></g>
   <rect x="0.500" y="0.500" width="41" height="64" fill="none" stroke="#b8805e" stroke-width="1"/>
  </svg></div>
  <div id="fdet" class="a"><div id="rsel" class="a"><svg width="8" height="9" viewBox="0 0 8 9" style="left:6px;top:1.500px"><path d="M0 0 l4.600 4 l-4.600 4z" fill="#0a0a0a"/></svg></div>
   <span class="a fl" style="top:19px">Код должности</span><div class="a fb" style="top:16.5px"><span style="background:#1b1b1b;color:#fff;display:inline-block;height:13px;line-height:13px;margin-top:1px;vertical-align:top">1</span></div>
   <span class="a fl" style="top:39px">Наименование должност</span><div class="a fb" style="top:36.5px">Регистратор</div>
   <span class="a fl" style="top:59px">ФИО</span><div class="a fb" style="top:56.5px">Дударов Дмитрий Петрович</div>
   <span class="a fl" style="top:79px">Возраст</span><div class="a fb" style="top:76.5px">29</div>
   <span class="a fl" style="top:99px">Пол</span><div class="a fb" style="top:96.5px">М<svg width="12" height="15" viewBox="0 0 12 15" style="left:170px;top:0.500px"><rect x="0.500" y="0.500" width="11" height="14" rx="1" fill="#e9e9e9" stroke="#6b6b6b"/><rect x="1.500" y="1.500" width="9" height="6" fill="#f8f8f8"/><path d="M3 6 h6 l-3 3.500z" fill="#111"/></svg></div>
   <span class="a fl" style="top:119px">Оклад</span><div class="a fb" style="top:116.5px">35 500,00р.</div>
  </div>
  <div id="fnav" class="a">
   <span class="a" style="left:4px;top:2px;font-size:8.200px;line-height:10px;color:#1f3a66;-webkit-text-stroke:0.2px #1f3a66">Запись:</span>
   <svg width="110" height="13" viewBox="0 0 110 13" style="left:35.500px;top:0">
    <rect x="1.500" y="3.500" width="1.200" height="6" fill="#1f3f80"/><path d="M7.500 3.500 v6 l-4 -3z" fill="#1f3f80"/>
    <path d="M18 3.500 v6 l-3.500 -3z" fill="#b4c2d8"/>
    <rect x="24.500" y="0.500" width="37" height="12" fill="#f2f7fd" stroke="#c5d6ee" stroke-width="1"/>
    <path d="M67.500 3.500 v6 l4 -3z" fill="#1f3f80"/>
    <path d="M79.500 3.500 v6 l4 -3z" fill="#1f3f80"/><rect x="84" y="3.500" width="1.200" height="6" fill="#1f3f80"/>
    <path d="M91 3.500 v6 l3.500 -3z" fill="#1f3f80"/><path d="M97 3 l0.800 2.200 l2.200 0.300 l-1.700 1.500 l0.500 2.300 l-1.800 -1.200 l-1.800 1.200 l0.500 -2.300 l-1.700 -1.500 l2.200 -0.300z" fill="#f0b81e" stroke="#c48a0a" stroke-width="0.400"/>
    <path d="M104.500 0 v13" stroke="#b9cdea" stroke-width="1"/>
   </svg>
   <span class="a" style="left:61px;top:1.500px;font-size:9px;line-height:11px;color:#111">1</span>
   <svg width="14" height="12" viewBox="0 0 14 12" style="left:146px;top:1px"><path d="M1 1 h9 l-3.500 4 v5 l-2 -1.500 v-3.500z" fill="#d4d9e2" stroke="#a9b1bf" stroke-width="0.800"/><path d="M8 6 l4 4 M12 6 l-4 4" stroke="#aeb5c2" stroke-width="1.100"/></svg>
   <span class="a" style="left:160.500px;top:2px;font-size:8.600px;line-height:10px;color:#a3a9b3">Нет фильтра</span>
   <div class="a" style="left:218px;top:0;width:1px;height:13px;background:#b9cdea"></div>
   <div class="a" style="left:223px;top:1px;width:51px;height:12px;background:#f1f6fd;border:1px solid #cfdef2"></div>
   <span class="a" style="left:225px;top:2px;font-size:8.600px;line-height:10px;color:#111;font-weight:bold;letter-spacing:-0.200px">Поиск</span>
  </div>
 </div>
</div>
<!-- STATUS -->
<div id="status" class="a"><span class="a" style="left:6px;top:4.500px;font-size:8.700px;line-height:10px;color:#15327b;-webkit-text-stroke:0.25px #15327b">Режим формы</span><span class="a" style="left:932.500px;top:4.500px;font-size:8.600px;line-height:10px;color:#15327b;-webkit-text-stroke:0.25px #15327b">Num Lock</span><svg width="46" height="17" viewBox="0 0 46 17" style="left:978px;top:0">
 <rect x="0" y="2" width="46" height="16" fill="#b9d3f5"/><path d="M0.500 2 v15" stroke="#8fb0e0" stroke-width="1"/>
 <rect x="2.500" y="1.500" width="14" height="14" rx="1.500" fill="#fbd16b" stroke="#c79a3a" stroke-width="1"/>
 <rect x="5" y="4.500" width="9" height="7.500" fill="#fdfdfd" stroke="#4b5f86" stroke-width="1"/><rect x="5.500" y="5" width="8" height="1.800" fill="#4b5f86"/><path d="M6.500 8.500 h2.500 M6.500 10.300 h2.500" stroke="#4b5f86" stroke-width="0.800"/><rect x="10" y="7.800" width="2.500" height="3" fill="#c9d3e6" stroke="#4b5f86" stroke-width="0.600"/>
 <rect x="20" y="4" width="8" height="9" fill="#f7f9fd" stroke="#4b5f86" stroke-width="1"/><path d="M21.500 6.500 h5 M21.500 8.500 h5 M21.500 10.500 h5" stroke="#4b5f86" stroke-width="0.800"/><path d="M26 4 v9" stroke="#4b5f86" stroke-width="0.600"/>
 <path d="M34 12.500 l1 -3.500 l6 -5 l2 2.500 l-6 5z" fill="#8fa6cf" stroke="#3f5580" stroke-width="0.800"/><path d="M33.500 4 h4 M33.500 4 v9 h8" fill="none" stroke="#3f5580" stroke-width="0.900"/>
</svg></div>
<!-- TASKBAR -->
<div id="task" class="a">
<svg width="1024" height="30" viewBox="0 0 1024 30" style="left:0;top:0">
 <defs>
  <radialGradient id="orb" cx="0.5" cy="0.35" r="0.65"><stop offset="0" stop-color="#8fd0f5"/><stop offset="0.55" stop-color="#2a78c2"/><stop offset="1" stop-color="#123a78"/></radialGradient>
  <linearGradient id="tbtn" x1="0" y1="0" x2="0" y2="1"><stop offset="0" stop-color="#f6f6f7"/><stop offset="1" stop-color="#dcdde0"/></linearGradient>
  <linearGradient id="tact" x1="0" y1="0" x2="0" y2="1"><stop offset="0" stop-color="#ffffff"/><stop offset="1" stop-color="#ececee"/></linearGradient>
  <linearGradient id="glass" x1="0" y1="0" x2="1" y2="0.050"><stop offset="0" stop-color="#fff" stop-opacity="0"/><stop offset="0.450" stop-color="#fff" stop-opacity="0.450"/><stop offset="0.550" stop-color="#fff" stop-opacity="0.100"/><stop offset="1" stop-color="#fff" stop-opacity="0"/></linearGradient>
 </defs>
 <path d="M470 0 h60 l-40 30 h-60z M560 0 h35 l-40 30 h-35z M660 0 h90 l-40 30 h-90z" fill="#f4f4f5" opacity="0.550"/>
 <!-- start orb -->
 <circle cx="20" cy="15" r="13.500" fill="url(#orb)" stroke="#3a5f8f" stroke-width="1"/>
 <path d="M13 9.500 q3.500 -2 6.500 0 l-1 4.500 q-3 -1.500 -6 0z" fill="#f0572a"/>
 <path d="M21 10 q3.500 1.500 6.500 -0.500 l-1.200 5 q-3 1.500 -6 0z" fill="#8fc63d"/>
 <path d="M12 15.500 q3 -1.500 6 0 l-1 4.500 q-3 -1.500 -6 0z" fill="#3fa0e8"/>
 <path d="M19.500 16.500 q3 1.500 6 0 l-1.200 4.500 q-3 1.500 -5.800 0z" fill="#fbc21a"/>
 <!-- IE -->
 <circle cx="67" cy="16" r="7.800" fill="none" stroke="#1f7ad8" stroke-width="4.800"/><circle cx="67" cy="16" r="9.600" fill="none" stroke="#1558b0" stroke-width="0.800" opacity="0.700"/>
 <path d="M60 16 h14" stroke="#1f7ad8" stroke-width="3"/><path d="M69 18 h8 v4 h-8z" fill="#e2e2e4"/>
 <path d="M57 22 q-2 -10 14 -16 q6 -1.500 5 2" fill="none" stroke="#f2b21a" stroke-width="1.800"/>
 <!-- explorer button -->
 <rect x="91.500" y="1.500" width="43" height="28" rx="2" fill="url(#tbtn)" stroke="#7f838b" stroke-width="1"/>
 <path d="M101 7 h8 l2 2 h13 v17 h-23z" fill="#f3d775" stroke="#c9a73a" stroke-width="0.800"/>
 <rect x="103" y="8" width="3" height="2" fill="#4aa84a"/><rect x="118" y="9.500" width="4" height="2" fill="#d9534a"/>
 <path d="M101 13 h23 v13 h-23z" fill="#f7e49a" stroke="#c9a73a" stroke-width="0.800"/>
 <path d="M104 17 h17 v9 h-17z" fill="#4f9fe0"/><path d="M106 21 h13 v5 h-13z" fill="#bfe0f8"/>
 <!-- WMP -->
 <path d="M149 6.500 l17 1.500 v15 l-17 1.500z" fill="#8fc0ec" stroke="#5f96cf" stroke-width="0.800"/><path d="M166 8 l2.500 0.800 v13.400 l-2.500 0.800z" fill="#c3daf0"/>
 <circle cx="157.500" cy="15.500" r="5.600" fill="#f28a1a" stroke="#fff" stroke-width="1.100"/><path d="M155.700 12.300 l5.200 3.200 l-5.200 3.200z" fill="#fff"/>
 <!-- HP -->
 <circle cx="206" cy="15" r="11" fill="#222a36" stroke="#8a93a3" stroke-width="1.500"/>
 <text x="204.500" y="19" font-size="11" font-style="italic" font-weight="bold" fill="#e8ecf3" text-anchor="middle" font-family="Liberation Sans, sans-serif">hp</text>
 <path d="M209 16 h8 v5 q-4 6 -8 0z" fill="#2f6fd0"/><path d="M209 16 h4 v4 h-4z" fill="#f2c21a"/><path d="M213 20 h4 q-1 4 -4 4.500z" fill="#f2c21a"/>
 <!-- photo gallery -->
 <rect x="246" y="6" width="15" height="13" fill="#dfe9f5" stroke="#9fb3cf" stroke-width="0.800"/>
 <rect x="248" y="8" width="5.500" height="5" fill="#f08a1a"/><rect x="254" y="8" width="5.500" height="5" fill="#e8452a"/><rect x="248" y="13.500" width="5.500" height="4" fill="#f2b21a"/><rect x="254" y="13.500" width="5.500" height="4" fill="#e85a2a"/>
 <path d="M243 17 q2 10 14 9" fill="none" stroke="#f2c85a" stroke-width="2"/>
 <!-- Word -->
 <rect x="287" y="3" width="22" height="21.500" fill="#f4f7fc" stroke="#6f95d0" stroke-width="0.900"/><rect x="288.500" y="4.500" width="15.500" height="15" fill="#2f62b5"/>
 <text x="296.300" y="17" font-size="13.500" font-weight="bold" fill="#fff" text-anchor="middle" font-family="Liberation Sans, sans-serif">W</text>
 <path d="M290 23 l17 -5 v6 h-17z" fill="#e4ebf8" opacity="0.900"/>
 <!-- Skype button -->
 <rect x="323.500" y="1.500" width="44" height="28" rx="2" fill="url(#tbtn)" stroke="#8a8d94" stroke-width="1"/>
 <circle cx="346" cy="15.500" r="9.500" fill="#2ea8e8"/><circle cx="340" cy="9.500" r="4.500" fill="#2ea8e8"/><circle cx="352" cy="21.500" r="4.500" fill="#2ea8e8"/>
 <text x="346" y="21" font-size="15" font-weight="bold" fill="#fff" text-anchor="middle" font-family="Liberation Sans, sans-serif">S</text>
 <!-- Access button (active) -->
 <rect x="369.500" y="1.500" width="44.500" height="28" rx="2" fill="url(#tact)" stroke="#6f737b" stroke-width="1"/>
 <path d="M380 6 l16 -2 v23 l-16 -2z" fill="#b03a68"/><path d="M385 5 h17 v20 h-17z" fill="#c95484" opacity="0.900"/><path d="M396 4 l0 23" stroke="#8a2a50" stroke-width="0.600"/>
 <circle cx="397" cy="12.500" r="4.200" fill="#fff"/><path d="M394 15 l-7 6 l1.500 2 l2 -1.500 l1.200 1.200 l1.600 -1.500 l-1 -1.300 l4 -3.400z" fill="#fff"/>
 <!-- Word doc button -->
 <rect x="419.500" y="1.500" width="40" height="28" rx="2" fill="#ededee" stroke="#8a8d94" stroke-width="1"/>
 <rect x="416.500" y="1.500" width="39" height="28" rx="2" fill="url(#tbtn)" stroke="#7f838b" stroke-width="1"/>
 <path d="M426 6 l14 -2 v22 l-14 -2z" fill="#2f62b5"/><rect x="432" y="6" width="14" height="18" fill="#f4f6fb" stroke="#9fb0cf" stroke-width="0.700"/>
 <path d="M434 12 h10 M434 15 h10 M434 18 h10 M434 21 h10" stroke="#3f6fc0" stroke-width="1.200"/>
 <text x="438" y="11.500" font-size="7" font-weight="bold" fill="#2f62b5" text-anchor="middle" font-family="Liberation Sans, sans-serif">W</text>
 <!-- tray -->
 <text x="845.500" y="17.500" font-size="8.800" fill="#f1f1f1" font-family="Liberation Sans, sans-serif">RU</text>
 <path d="M869 17 l3 -3.500 l3 3.500z" fill="#f4f4f4"/>
 <rect x="884" y="8" width="12" height="12" rx="1.500" fill="#f0b82a" stroke="#b8860a" stroke-width="0.700"/><circle cx="889.500" cy="13.500" r="3.500" fill="#c9761a"/><circle cx="894" cy="18" r="3.300" fill="#e0281e" stroke="#fff" stroke-width="0.600"/><path d="M892.500 16.500 l3 3 M895.500 16.500 l-3 3" stroke="#fff" stroke-width="1"/>
 <rect x="902" y="8" width="9" height="12" rx="1" fill="#f4f4f4" stroke="#4a4a4a" stroke-width="1"/><rect x="905" y="6.500" width="7" height="9" fill="#dcdcdc" stroke="#4a4a4a" stroke-width="0.800"/><path d="M904 13 h4 M904 15.500 h5 M904 17.500 h4" stroke="#4a4a4a" stroke-width="0.800"/>
 <path d="M921 19 v-3 h2 v3z M924 19 v-5 h2 v5z M927 19 v-8 h2.500 v8z" fill="#e8e8e8" stroke="#6b6b6b" stroke-width="0.500"/><path d="M925 14.500 l6 6 M931 14.500 l-6 6" stroke="#e0281e" stroke-width="1.800"/>
 <path d="M938 11.500 h2.500 l3.500 -3.500 v12 l-3.500 -3.500 h-2.500z" fill="#f1f1f1" stroke="#5a5a5a" stroke-width="0.600"/><circle cx="947.500" cy="17" r="3.300" fill="#e0281e" stroke="#fff" stroke-width="0.500"/><path d="M945.500 19 l4 -4" stroke="#fff" stroke-width="1"/>
 <text x="984" y="12.300" font-size="8.600" fill="#fbfbfb" stroke="#fbfbfb" stroke-width="0.200" text-anchor="middle" font-family="Liberation Sans, sans-serif">12:46</text>
 <text x="983.500" y="24.700" font-size="8.200" fill="#fbfbfb" stroke="#fbfbfb" stroke-width="0.200" text-anchor="middle" font-family="Liberation Sans, sans-serif">24.06.2011</text>
 <rect x="1013.500" y="0.500" width="11" height="30" fill="#9c9c9c" stroke="#6f6f6f" stroke-width="1"/><rect x="1014.500" y="1.500" width="3" height="28" fill="#bdbdbd"/><rect x="1017.500" y="1.500" width="3" height="28" fill="#acacac"/>
</svg></div>
</body></html>
